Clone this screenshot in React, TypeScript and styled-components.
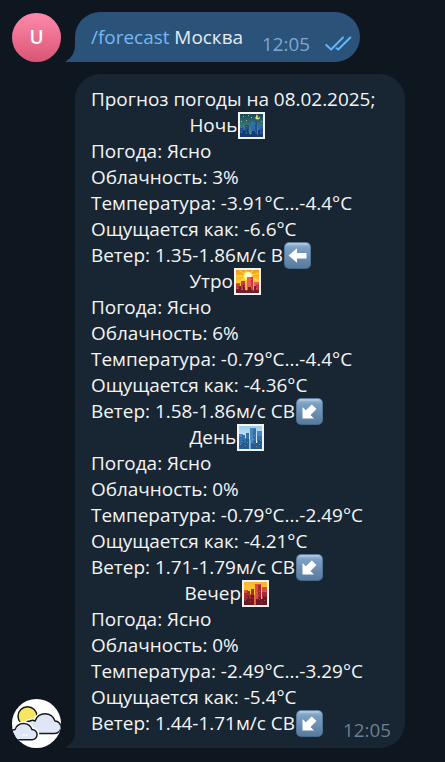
import React from 'react';
import styled, { createGlobalStyle } from 'styled-components';

const Global = createGlobalStyle`
  body { margin: 0; background: #0e1620; font-family: "Open Sans", "Noto Sans", sans-serif; }
`;

const Chat = styled.main`
  box-sizing: border-box;
  width: 445px;
  height: 762px;
  padding: 12px;
  display: flex;
  flex-direction: column;
  gap: 12px;
  background: #0e1620;
  overflow: hidden;
`;

const MessageRow = styled.div`
  display: flex;
  align-items: flex-end;
  gap: 14px;
`;

const Avatar = styled.div<{ $plain?: boolean }>`
  flex: none;
  width: 49px;
  height: 49px;
  border-radius: 50%;
  overflow: hidden;
  display: flex;
  align-items: center;
  justify-content: center;
  color: #fff;
  font-size: 19px;
  font-weight: 600;
  line-height: 49px;
  background: ${(p) => (p.$plain ? '#fff' : 'linear-gradient(#ff8aac, #d95574)')};
`;

const Bubble = styled.div<{ $own?: boolean }>`
  position: relative;
  box-sizing: border-box;
  width: ${(p) => (p.$own ? 285 : 330)}px;
  padding: 12px ${(p) => (p.$own ? 8 : 14)}px 12px 16px;
  border-radius: 25px 25px 25px 0;
  display: flex;
  align-items: flex-end;
  justify-content: space-between;
  color: ${(p) => (p.$own ? '#e4ecf2' : '#f5f5f5')};
  background: ${(p) => (p.$own ? '#2b5278' : '#182533')};
`;

const Tail = styled.svg`
  position: absolute;
  left: -10px;
  bottom: 0;
`;

const Text = styled.div`
  flex: none;
  font-size: 18.95px;
  line-height: 26px;
  white-space: pre;
`;

const Line = styled.div`
  height: 26px;
  display: flex;
  align-items: center;
`;

const Command = styled.span`
  color: #73b9f5;
`;

const Meta = styled.div<{ $own?: boolean }>`
  display: flex;
  align-items: center;
  gap: 15px;
  height: 26px;
  margin-bottom: -7px;
  margin-left: ${(p) => (p.$own ? 0 : -60)}px;
  font-size: 18.8px;
  line-height: 26px;
  color: ${(p) => (p.$own ? '#7da8d3' : '#6d7f8f')};
`;

const Emoji = styled.svg`
  flex: none;
  width: 27px;
  height: 27px;
  margin-left: 0.6px;
`;

type City = 'night' | 'morning' | 'day' | 'evening';

const palettes: Record<City, { top: string; mid: string; low: string; far: string; near: string; dark: string; win: string }> = {
  night: { top: '#174956', mid: '#3a7672', low: '#5b9080', far: '#2b6cb0', near: '#1f5092', dark: '#163a72', win: '#4f8fb5' },
  morning: { top: '#f79a1b', mid: '#ffc62c', low: '#ff9d27', far: '#ec5a55', near: '#c03a42', dark: '#751d2d', win: '#ee8a59' },
  day: { top: '#9bcbea', mid: '#c9e7f5', low: '#e9f7fa', far: '#4785bd', near: '#3470aa', dark: '#28598f', win: '#83c0e4' },
  evening: { top: '#ffb52c', mid: '#ffcf2c', low: '#ffdc35', far: '#e04a42', near: '#a92a35', dark: '#6d1826', win: '#e66b41' },
};

const CityIcon = ({ kind }: { kind: City }) => {
  const c = palettes[kind];
  const wide = kind === 'day' || kind === 'evening';
  const id = `sky-${kind}`;
  return (
    <Emoji viewBox="0 0 27 27">
      <defs>
        <linearGradient id={id} x2="0" y2="1">
          <stop stopColor={c.top} />
          <stop offset=".5" stopColor={c.mid} />
          <stop offset="1" stopColor={c.low} />
        </linearGradient>
      </defs>
      <path fill="#f4f4ef" d="M0 0h27v27H0z" />
      <path fill={`url(#${id})`} d="M2 2h23v23H2z" />
      {kind === 'morning' && (
        <>
          <path stroke="#ffe14a" strokeWidth="1" d="M14 8 5 2M14 8 11 2M14 8 19 2M14 8l11-3M14 8 2 8M14 8 3 15M14 8l11 5" />
          <circle cx="14" cy="8" r="4.500" fill="#fff07a" />
          <circle cx="14" cy="7.500" r="3" fill="#fffde2" />
        </>
      )}
      {kind === 'night' && (
        <>
          <path fill="#e4df7a" d="M18 2.500q3 1 1.500 3 2 .500 2.500-1 0 3-2.500 3-2 0-2.500-2 2-.5 1-3" />
          <path fill="#9fb984" d="M5 4h1v1H5zM10 3h1v1h-1zM13 5h1v1h-1zM8 8h1v1H8zM3 9h1v1H3zM23 9h1v1h-1z" />
        </>
      )}
      {wide ? (
        <>
          <path fill={c.far} d="M13 25V4h6v21zM20 25V7h5v18zM2 25V10h4v15z" />
          <path fill={c.near} d="M2 25V13h3v-2h3v3h1V9h3v16zM16 25V5h3v20zM20 25V12h5v13z" />
          <path fill={c.dark} d="M2 25v-5h3v-4h2v3h2v-4h3v10zM14 25v-6h3v-2h2v2h2v-3h4v9z" />
          <path fill={c.win} d="M12 15h1.500v10H12z" />
        </>
      ) : (
        <>
          <path fill={c.far} d="M13 25V9h6v16zM20 25V14h5v11zM2 25V15h4v10z" />
          <path fill={c.near} d="M2 25v-9h4v3h1v-6h4v12zM17 25V9h2v16zM22 25V16h3v9z" />
          <path fill={c.dark} d="M2 25v-4h3v-3h2v4h2v-5h2v5h3v-3h3v3h3v-4h2v4h3v3z" />
        </>
      )}
      <path
        fill={c.win}
        opacity=".55"
        d="M3 20h1v1H3zM5 17h1v1H5zM8 14h1v1H8zM8 21h1v1H8zM10 18h1v1h-1zM12 22h1v1h-1zM14 12h1v1h-1zM17 11h1v1h-1zM16 15h1v1h-1zM17 19h1v1h-1zM20 17h1v1h-1zM22 20h1v1h-1zM23 16h1v1h-1zM19 22h1v1h-1z"
      />
    </Emoji>
  );
};

const ArrowIcon = ({ diagonal }: { diagonal?: boolean }) => (
  <Emoji viewBox="0 0 27 27">
    <defs>
      <linearGradient id="key" x2="0" y2="1">
        <stop stopColor="#a3bfd8" />
        <stop offset=".2" stopColor="#7ba0c4" />
        <stop offset="1" stopColor="#587a9b" />
      </linearGradient>
    </defs>
    <rect width="27" height="27" rx="5" fill="#46698b" />
    <rect x=".7" y=".7" width="25.6" height="25.3" rx="4.5" fill="url(#key)" />
    <path d="M4 2h19" stroke="#bdd2e4" strokeWidth="1.2" strokeLinecap="round" />
    {diagonal ? (
      <path fill="#fff" d="M6.500 9 9.800 12.300l6-5.800 4.700 4.400-6 6 3.500 3.600H6.500z" />
    ) : (
      <path fill="#fff" d="M4.500 13.500 13 6.300v4.700h9.500v5.500H13v4.300z" />
    )}
  </Emoji>
);

const Checks = () => (
  <svg width="27" height="16" viewBox="0 0 27 16" fill="none" stroke="#64b5f6" strokeWidth="2" strokeLinecap="round" strokeLinejoin="round">
    <path d="m1.300 9 4.800 4.500L18 1.500M11.500 12.300l1.700 1.200L25.300 1.500" />
  </svg>
);

const RIGHT_CLOUD = 'M18 34.500a6 6 0 0 1 0-12.500q2.500-1.500 5 0a10.500 10.500 0 0 1 20 0a6.200 6.200 0 0 1-.500 12.400z';
const LEFT_CLOUD = 'M1 40.700H20a5.100 5.100 0 0 0 0-10.200a9 9 0 0 0-17 0Q-1 31-3 35v5.700z';

const CloudLogo = () => (
  <svg width="49" height="49" viewBox="0 0 49 49" stroke="#16181a" strokeWidth="1.5" strokeLinecap="round" strokeLinejoin="round">
    <circle cx="15.500" cy="17.300" r="9.500" fill="#f6e55f" />
    <path fill="#dfe6f5" stroke="#fff" strokeWidth="4" d={RIGHT_CLOUD} />
    <path fill="#dfe6f5" d={RIGHT_CLOUD} />
    <path fill="#dfe6f5" stroke="#fff" strokeWidth="4.500" d={LEFT_CLOUD} />
    <path fill="#dfe6f5" d={LEFT_CLOUD} />
    <path stroke="#fff" strokeWidth="1.300" d="M11.500 36h.6M14.200 36h.6" />
  </svg>
);

const BubbleTail = ({ color }: { color: string }) => (
  <Tail width="11" height="20" viewBox="0 0 11 20">
    <path fill={color} d="M10 0h1v20H1q-1-.5.500-1.300Q10 14 10 3z" />
  </Tail>
);

const periods: { indent: number; name: string; city: City; clouds: string; temp: string; feels: string; wind: string; diagonal?: boolean }[] = [
  { indent: 20, name: 'Ночь', city: 'night', clouds: '3%', temp: '-3.91°C...-4.4°C', feels: '-6.6°C', wind: '1.35-1.86м/с В' },
  { indent: 20, name: 'Утро', city: 'morning', clouds: '6%', temp: '-0.79°C...-4.4°C', feels: '-4.36°C', wind: '1.58-1.86м/с СВ', diagonal: true },
  { indent: 20, name: 'День', city: 'day', clouds: '0%', temp: '-0.79°C...-2.49°C', feels: '-4.21°C', wind: '1.71-1.79м/с СВ', diagonal: true },
  { indent: 19, name: 'Вечер', city: 'evening', clouds: '0%', temp: '-2.49°C...-3.29°C', feels: '-5.4°C', wind: '1.44-1.71м/с СВ', diagonal: true },
];

export default function App() {
  return (
    <>
      <Global />
      <Chat>
        <MessageRow>
          <Avatar>U</Avatar>
          <Bubble $own>
            <BubbleTail color="#2b5278" />
            <Text>
              <Command>/forecast</Command> Москва
            </Text>
            <Meta $own>
              12:05
              <Checks />
            </Meta>
          </Bubble>
        </MessageRow>
        <MessageRow>
          <Avatar $plain>
            <CloudLogo />
          </Avatar>
          <Bubble>
            <BubbleTail color="#182533" />
            <Text>
              <Line>Прогноз погоды на 08.02.2025;</Line>
              {periods.map((p) => (
                <React.Fragment key={p.name}>
                  <Line>
                    {' '.repeat(p.indent) + p.name}
                    <CityIcon kind={p.city} />
                  </Line>
                  <Line>Погода: Ясно</Line>
                  <Line>Облачность: {p.clouds}</Line>
                  <Line>Температура: {p.temp}</Line>
                  <Line>Ощущается как: {p.feels}</Line>
                  <Line>
                    Ветер: {p.wind}
                    <ArrowIcon diagonal={p.diagonal} />
                  </Line>
                </React.Fragment>
              ))}
            </Text>
            <Meta>12:05</Meta>
          </Bubble>
        </MessageRow>
      </Chat>
    </>
  );
}
